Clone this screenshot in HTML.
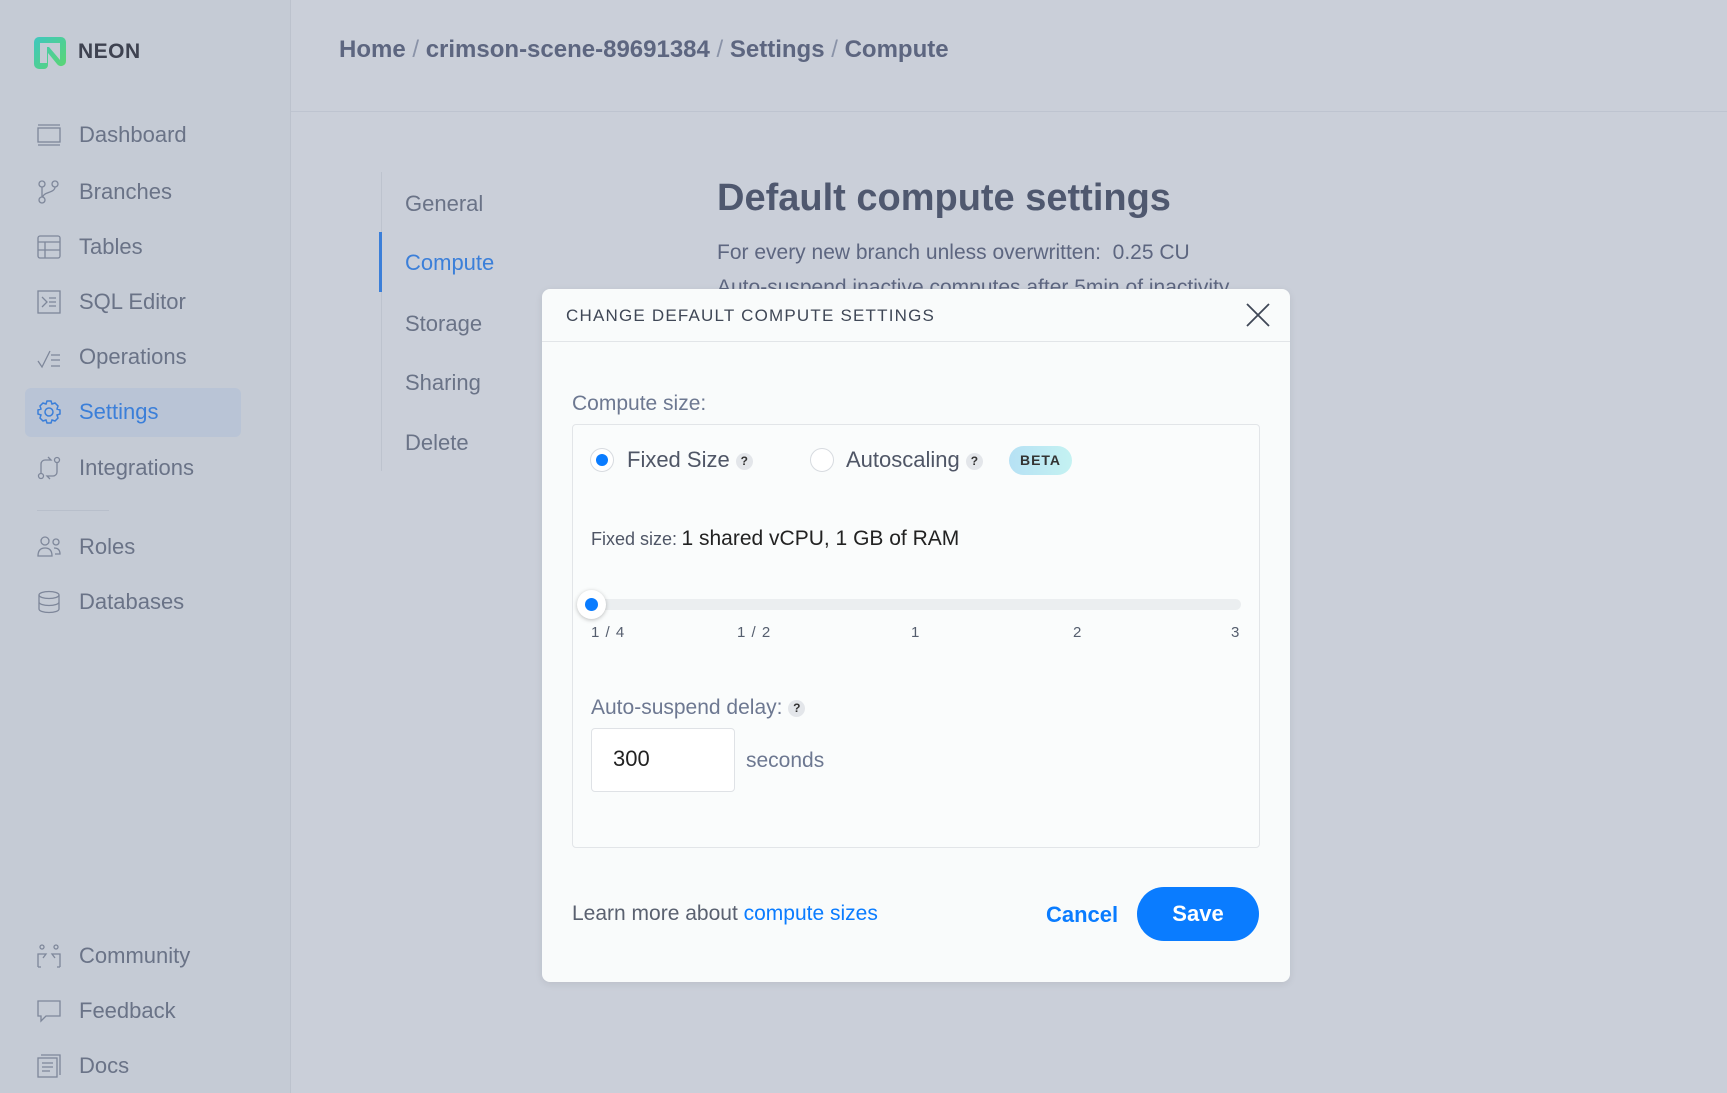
<!DOCTYPE html>
<html><head><meta charset="utf-8"><style>
*{box-sizing:border-box;margin:0;padding:0}
body{width:1727px;height:1093px;overflow:hidden;background:#cacfd9;font-family:"Liberation Sans",sans-serif;position:relative}
.side{position:absolute;left:0;top:0;width:291px;height:1093px;background:#c5cbd5;border-right:1px solid #bcc2cd}
.abs{position:absolute}
.nav{position:absolute;left:79px;font-size:22px;color:#6a7387;transform:translateY(-50%)}
.ico{position:absolute;left:37px;width:24px;height:24px;transform:translateY(-50%)}
.sub{position:absolute;left:405px;font-size:22px;color:#6a7387;transform:translateY(-50%)}
.q{display:inline-block;width:17px;height:17px;border-radius:50%;background:#e3e6ea;color:#333;font-size:12px;font-weight:bold;text-align:center;line-height:17px;vertical-align:middle}
.lbl{position:absolute;font-size:15px;color:#555e6e;letter-spacing:1px;top:624px}
</style></head><body>
<div class="side"></div>
<svg class="abs" style="left:33px;top:36px" width="34" height="34" viewBox="0 0 34 34"><defs><linearGradient id="g" x1="0" y1="0" x2="1" y2="1"><stop offset="0" stop-color="#3fc7c0"/><stop offset="1" stop-color="#5cd66f"/></linearGradient></defs><path d="M6 1h22a5 5 0 0 1 5 5v19a5 5 0 0 1-9 3l-9-11v12a4 4 0 0 1-4 4H6a5 5 0 0 1-5-5V6a5 5 0 0 1 5-5z" fill="url(#g)"/><path d="M7 7h20v17L16 11h-2v16H7z" fill="#c5cbd5"/></svg>
<div class="abs" style="left:78px;top:40px;font-size:21px;font-weight:bold;color:#3e4250;letter-spacing:0.5px">NEON</div>

<div class="abs" style="left:25px;top:388px;width:216px;height:49px;background:#b9c4d6;border-radius:6px"></div>
<svg class="ico" style="top:135px" viewBox="0 0 24 24" fill="none" stroke="#7e879a" stroke-width="1.3"><path d="M1 2h22M1 22h22"/><rect x="1" y="5" width="22" height="14"/></svg>
<div class="nav" style="top:135px">Dashboard</div>
<svg class="ico" style="top:192px" viewBox="0 0 24 24" fill="none" stroke="#7e879a" stroke-width="1.3"><circle cx="5" cy="4" r="3"/><circle cx="18" cy="4" r="3"/><circle cx="5" cy="20" r="3"/><path d="M5 7v10M18 7c0 6-12 5-12 10"/></svg>
<div class="nav" style="top:192px">Branches</div>
<svg class="ico" style="top:247px" viewBox="0 0 24 24" fill="none" stroke="#7e879a" stroke-width="1.3"><rect x="1" y="1" width="22" height="22" rx="2"/><path d="M1 7h22M1 15h22M8 7v16"/></svg>
<div class="nav" style="top:247px">Tables</div>
<svg class="ico" style="top:302px" viewBox="0 0 24 24" fill="none" stroke="#7e879a" stroke-width="1.3"><rect x="1" y="1" width="22" height="22"/><path d="M5 7l5 5-5 5M12 8h7M12 12h7M12 16h7"/></svg>
<div class="nav" style="top:302px">SQL Editor</div>
<svg class="ico" style="top:357px" viewBox="0 0 24 24" fill="none" stroke="#7e879a" stroke-width="1.3"><path d="M1 16l4 6 8-16M14 10h9M14 15h9M14 21h9"/></svg>
<div class="nav" style="top:357px">Operations</div>
<svg class="ico" style="top:412px" viewBox="0 0 24 24" fill="none" stroke="#3b7fd9" stroke-width="1.5"><circle cx="12" cy="12" r="4"/><path d="M10 1h4l1 3 3-1 3 3-1 3 3 1v4l-3 1 1 3-3 3-3-1-1 3h-4l-1-3-3 1-3-3 1-3-3-1v-4l3-1-1-3 3-3 3 1z"/></svg>
<div class="nav" style="top:412px;color:#3b7fd9">Settings</div>
<svg class="ico" style="top:468px" viewBox="0 0 24 24" fill="none" stroke="#7e879a" stroke-width="1.3"><circle cx="4" cy="20" r="2.5"/><circle cx="20" cy="4" r="2.5"/><path d="M4 17V8a4 4 0 0 1 4-4h6l-3-3M20 7v9a4 4 0 0 1-4 4h-6l3 3"/></svg>
<div class="nav" style="top:468px">Integrations</div>
<div class="abs" style="left:37px;top:510px;width:72px;height:1px;background:#b8bfcb"></div>
<svg class="ico" style="top:547px" viewBox="0 0 24 24" fill="none" stroke="#7e879a" stroke-width="1.3"><circle cx="8" cy="6" r="4"/><circle cx="19" cy="7" r="3"/><path d="M1 21c0-6 3-8 7-8s7 2 7 8zM17 13c4 0 6 2 6 6h-5"/></svg>
<div class="nav" style="top:547px">Roles</div>
<svg class="ico" style="top:602px" viewBox="0 0 24 24" fill="none" stroke="#7e879a" stroke-width="1.3"><ellipse cx="12" cy="5" rx="10" ry="3.5"/><path d="M2 5v14c0 2 4.5 3.5 10 3.5s10-1.5 10-3.5V5M2 12c0 2 4.5 3.5 10 3.5s10-1.5 10-3.5"/></svg>
<div class="nav" style="top:602px">Databases</div>
<svg class="ico" style="top:956px" viewBox="0 0 24 24" fill="none" stroke="#7e879a" stroke-width="1.3"><circle cx="5" cy="3" r="2"/><circle cx="19" cy="3" r="2"/><path d="M1 23v-13h8l-3 4M23 23v-13h-8l3 4M1 23h3M20 23h3"/></svg>
<div class="nav" style="top:956px">Community</div>
<svg class="ico" style="top:1011px" viewBox="0 0 24 24" fill="none" stroke="#7e879a" stroke-width="1.3"><path d="M1 2h22v15H9l-5 5v-5H1z"/></svg>
<div class="nav" style="top:1011px">Feedback</div>
<svg class="ico" style="top:1066px" viewBox="0 0 24 24" fill="none" stroke="#7e879a" stroke-width="1.3"><path d="M4 1h19v20"/><rect x="1" y="4" width="19" height="19"/><path d="M5 9h11M5 13h11M5 17h8"/></svg>
<div class="nav" style="top:1066px">Docs</div>

<div class="abs" style="left:291px;top:111px;width:1436px;height:1px;background:#bec4d0"></div>
<div class="abs" style="left:339px;top:36px;font-size:24px;font-weight:bold;color:#5d6680">Home <span style="color:#8a93a8;font-weight:normal">/</span> crimson-scene-89691384 <span style="color:#8a93a8;font-weight:normal">/</span> Settings <span style="color:#8a93a8;font-weight:normal">/</span> Compute</div>

<div class="abs" style="left:381px;top:172px;width:1px;height:299px;background:#bdc3ce"></div>
<div class="abs" style="left:379px;top:232px;width:3px;height:60px;background:#3b7fd9"></div>
<div class="sub" style="top:204px">General</div>
<div class="sub" style="top:263px;color:#3b7fd9">Compute</div>
<div class="sub" style="top:324px">Storage</div>
<div class="sub" style="top:383px">Sharing</div>
<div class="sub" style="top:443px">Delete</div>

<div class="abs" style="left:717px;top:177px;font-size:38px;font-weight:bold;color:#4f586f">Default compute settings</div>
<div class="abs" style="left:717px;top:241px;font-size:21px;color:#5d6680">For every new branch unless overwritten:&nbsp; 0.25 CU</div>
<div class="abs" style="left:717px;top:276px;font-size:21px;color:#5d6680">Auto-suspend inactive computes after 5min of inactivity</div>

<div class="abs" style="left:542px;top:289px;width:748px;height:693px;background:#f9fbfb;border-radius:8px;box-shadow:0 2px 8px rgba(0,0,0,.08)">
  <div class="abs" style="left:24px;top:17px;font-size:17px;color:#3f4756;letter-spacing:1.2px">CHANGE DEFAULT COMPUTE SETTINGS</div>
  <svg class="abs" style="left:703px;top:13px" width="26" height="26" viewBox="0 0 26 26" stroke="#3f4756" stroke-width="1.8"><path d="M2 2l22 22M24 2L2 24"/></svg>
  <div class="abs" style="left:0;top:52px;width:748px;height:1px;background:#e2e5e8"></div>
  <div class="abs" style="left:30px;top:103px;font-size:21px;color:#6d7891">Compute size:</div>
  <div class="abs" style="left:30px;top:135px;width:688px;height:424px;border:1px solid #e2e5e8;border-radius:4px;background:#fafcfc"></div>
  <div class="abs" style="left:48px;top:159px;width:24px;height:24px;border-radius:50%;border:1px solid #d7dbe0;background:#fff"><div style="margin:5px;width:12px;height:12px;border-radius:50%;background:#0a7cff"></div></div>
  <div class="abs" style="left:85px;top:158px;font-size:22px;color:#4f5666">Fixed Size <span class="q">?</span></div>
  <div class="abs" style="left:268px;top:159px;width:24px;height:24px;border-radius:50%;border:1px solid #d7dbe0;background:#fff"></div>
  <div class="abs" style="left:304px;top:158px;font-size:22px;color:#4f5666">Autoscaling <span class="q">?</span></div>
  <div class="abs" style="left:467px;top:157px;width:63px;height:29px;border-radius:15px;background:linear-gradient(90deg,#b6e1f4,#c4f2f2);font-size:14px;font-weight:bold;color:#333;letter-spacing:1px;text-align:center;line-height:29px">BETA</div>
  <div class="abs" style="left:49px;top:238px;color:#4f5666"><span style="font-size:18px">Fixed size:</span> <span style="font-size:21px;color:#222">1 shared vCPU, 1 GB of RAM</span></div>
  <div class="abs" style="left:49px;top:310px;width:650px;height:11px;border-radius:6px;background:#ebeef0"></div>
  <div class="abs" style="left:35px;top:301px;width:29px;height:29px;border-radius:50%;background:#fff;box-shadow:0 1px 4px rgba(0,0,0,.25)"><div style="margin:8px;width:13px;height:13px;border-radius:50%;background:#0a7cff"></div></div>
</div>
<div class="lbl" style="left:591px">1 / 4</div>
<div class="lbl" style="left:737px">1 / 2</div>
<div class="lbl" style="left:911px">1</div>
<div class="lbl" style="left:1073px">2</div>
<div class="lbl" style="left:1231px">3</div>
<div class="abs" style="left:591px;top:696px;font-size:21px;color:#6d7891">Auto-suspend delay: <span class="q">?</span></div>
<div class="abs" style="left:591px;top:728px;width:144px;height:64px;background:#fff;border:1px solid #dfe2e6;border-radius:4px;font-size:22px;color:#222;padding:17px 0 0 21px">300</div>
<div class="abs" style="left:746px;top:749px;font-size:21px;color:#6d7891">seconds</div>
<div class="abs" style="left:572px;top:902px;font-size:21px;color:#5a6170">Learn more about <span style="color:#0a7cff">compute sizes</span></div>
<div class="abs" style="left:1046px;top:902px;font-size:22px;color:#0a7cff;font-weight:bold">Cancel</div>
<div class="abs" style="left:1137px;top:887px;width:122px;height:54px;border-radius:27px;background:#0a7cff;color:#fff;font-size:22px;font-weight:bold;text-align:center;line-height:54px">Save</div>
</body></html>
